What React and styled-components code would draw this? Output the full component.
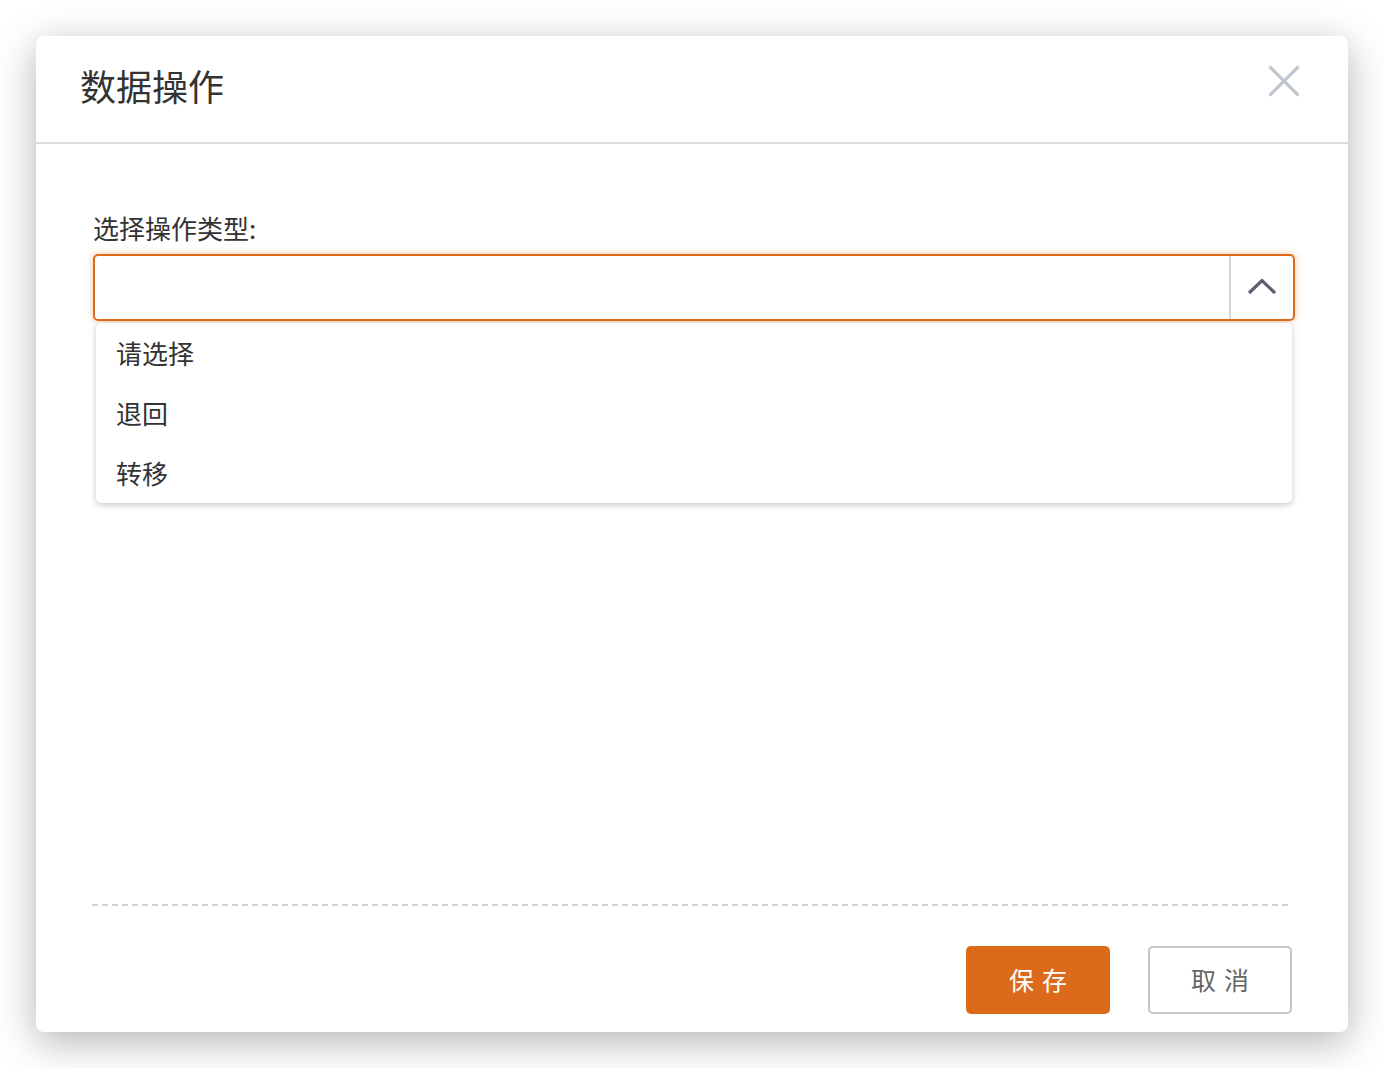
import React, { useState } from "react";
import styled, { createGlobalStyle } from "styled-components";

const GlobalStyle = createGlobalStyle`
  html, body {
    margin: 0;
    padding: 0;
    background: #ffffff;
  }
  body {
    font-family: "Noto Sans CJK SC", "Noto Sans", sans-serif;
    color: #333333;
  }
`;

const Page = styled.div`
  padding: 36px;
  width: 1384px;
  height: 1068px;
  box-sizing: border-box;
`;

const Dialog = styled.div`
  width: 1312px;
  height: 996px;
  background: #ffffff;
  border-radius: 8px;
  box-shadow: 0 10px 40px rgba(0, 0, 0, 0.3);
  display: flex;
  flex-direction: column;
  overflow: hidden;
`;

const Header = styled.div`
  height: 106px;
  border-bottom: 2px solid #dcdce2;
  display: flex;
  align-items: flex-start;
  justify-content: space-between;
  padding: 0 48px 0 44px;
  flex-shrink: 0;
`;

const Title = styled.h2`
  margin: 31px 0 0;
  font-size: 36px;
  font-weight: 400;
  line-height: 36px;
  color: #333333;
`;

const CloseButton = styled.button`
  margin-top: 29px;
  width: 32px;
  height: 32px;
  padding: 0;
  border: none;
  background: none;
  cursor: pointer;
  display: flex;
`;

const Body = styled.div`
  flex: 1;
  padding: 68px 53px 0 57px;
`;

const Label = styled.div`
  font-size: 26px;
  line-height: 32px;
  color: #333333;
  margin-bottom: 10px;
`;

const SelectWrap = styled.div`
  position: relative;
`;

const SelectBox = styled.div`
  height: 67px;
  box-sizing: border-box;
  border: 2px solid ${({ open }) => (open ? "#dd6b1b" : "#c8c8c8")};
  border-radius: 5px;
  box-shadow: ${({ open }) =>
    open ? "0 0 7px rgba(232, 120, 40, 0.45)" : "none"};
  display: flex;
  cursor: pointer;
`;

const SelectValue = styled.div`
  flex: 1;
  font-size: 26px;
  line-height: 63px;
  padding-left: 20px;
`;

const Toggle = styled.div`
  width: 64px;
  box-sizing: border-box;
  border-left: 2px solid #d6d6de;
  display: flex;
  align-items: center;
  justify-content: center;
`;

const Menu = styled.ul`
  position: absolute;
  top: 69px;
  left: 3px;
  right: 3px;
  margin: 0;
  padding: 0;
  list-style: none;
  background: #ffffff;
  border-radius: 5px;
  box-shadow: 0 2px 6px rgba(0, 0, 0, 0.22);
  z-index: 2;
`;

const MenuItem = styled.li`
  height: 60px;
  line-height: 60px;
  padding-left: 20px;
  font-size: 26px;
  color: #333333;
  cursor: pointer;
`;

const Footer = styled.div`
  margin: 0 56px;
  padding: 42px 0 18px;
  position: relative;
  display: flex;
  justify-content: flex-end;
  gap: 38px;

  &::before {
    content: "";
    position: absolute;
    top: 0;
    left: 0;
    right: 0;
    height: 2px;
    background: repeating-linear-gradient(
      to right,
      #d2d2d2 0 6px,
      transparent 6px 10px
    );
  }
`;

const Button = styled.button`
  width: 144px;
  height: 68px;
  box-sizing: border-box;
  border-radius: 5px;
  font-family: inherit;
  font-size: 25px;
  letter-spacing: 8px;
  padding: 0 0 3px 8px;
  cursor: pointer;
  border: 2px solid ${({ primary }) => (primary ? "#db6b1b" : "#c6c6c6")};
  background: ${({ primary }) => (primary ? "#db6b1b" : "#ffffff")};
  color: ${({ primary }) => (primary ? "#ffffff" : "#666666")};
`;

const CloseIcon = () => (
  <svg width="32" height="32" viewBox="0 0 32 32">
    <path
      d="M1.5 1.5 L30.5 30.5 M30.5 1.5 L1.5 30.5"
      stroke="#c1c6d1"
      strokeWidth="3.2"
      fill="none"
    />
  </svg>
);

const ChevronUp = () => (
  <svg width="30" height="18" viewBox="0 0 30 18">
    <path
      d="M2 14 L15 1.5 L28 14"
      stroke="#5a606e"
      strokeWidth="3.2"
      fill="none"
    />
  </svg>
);

const options = ["请选择", "退回", "转移"];

export default function App() {
  const [open, setOpen] = useState(true);
  const [value, setValue] = useState("");

  return (
    <>
      <GlobalStyle />
      <Page>
        <Dialog>
          <Header>
            <Title>数据操作</Title>
            <CloseButton aria-label="关闭">
              <CloseIcon />
            </CloseButton>
          </Header>
          <Body>
            <Label>选择操作类型:</Label>
            <SelectWrap>
              <SelectBox open={open} onClick={() => setOpen(!open)}>
                <SelectValue>{value}</SelectValue>
                <Toggle>
                  <ChevronUp />
                </Toggle>
              </SelectBox>
              {open && (
                <Menu>
                  {options.map((o) => (
                    <MenuItem
                      key={o}
                      onClick={() => {
                        setValue(o === "请选择" ? "" : o);
                        setOpen(false);
                      }}
                    >
                      {o}
                    </MenuItem>
                  ))}
                </Menu>
              )}
            </SelectWrap>
          </Body>
          <Footer>
            <Button primary>保存</Button>
            <Button>取消</Button>
          </Footer>
        </Dialog>
      </Page>
    </>
  );
}
